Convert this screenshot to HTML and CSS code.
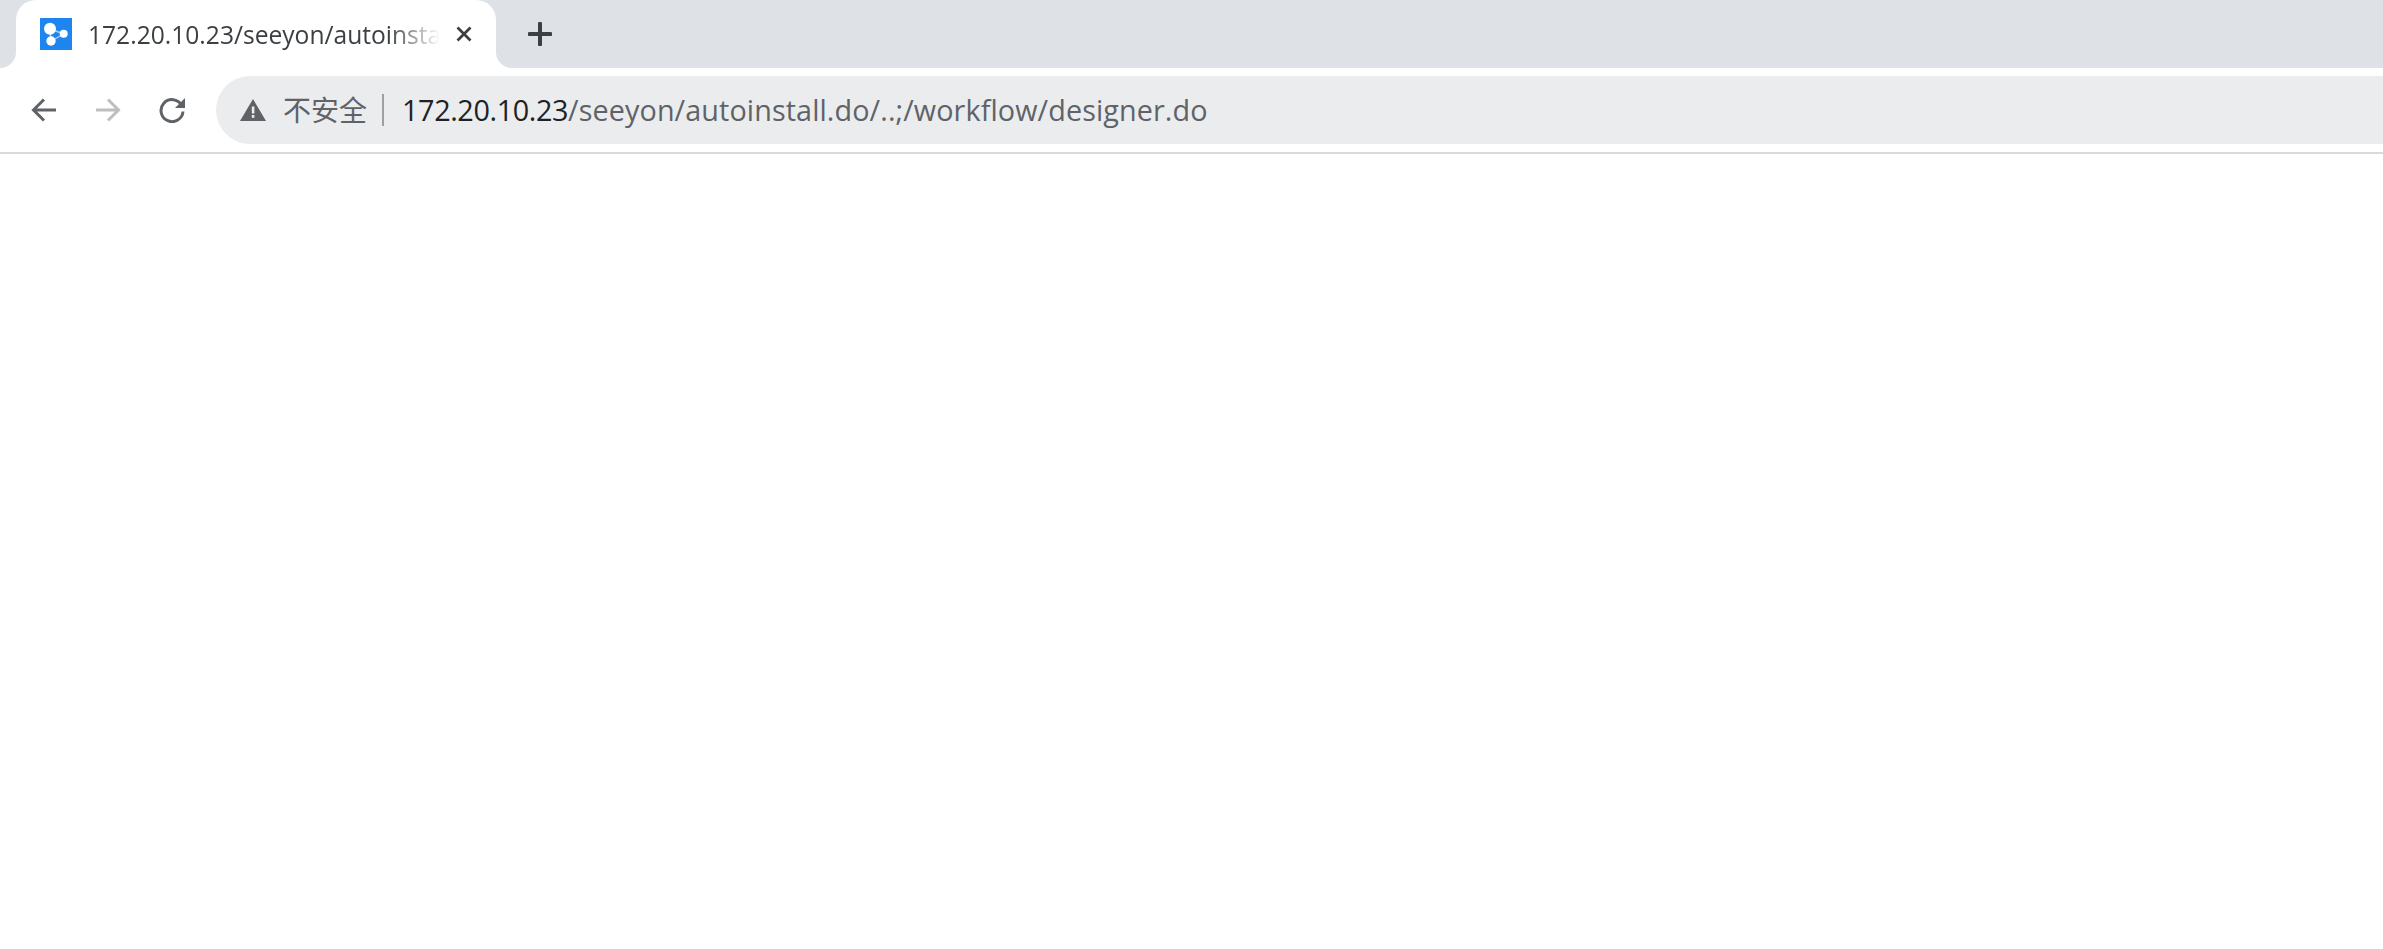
FILE: index.html
```html
<!DOCTYPE html>
<html lang="zh-CN">
<head>
<meta charset="utf-8">
<title>172.20.10.23/seeyon/autoinstall.do/..;/workflow/designer.do</title>
<link rel="stylesheet" href="styles.css">
</head>
<body>
<header class="chrome">
  <div class="tabstrip">
    <div class="tab">
      <svg class="favicon" viewBox="0 0 32 32" aria-hidden="true">
        <rect width="32" height="32" fill="#1e85ef"/>
        <path d="M10 11 24 16M24 16 11 23M10 11 11 23" stroke="#a9d0f8" stroke-width="1.4" fill="none"/>
        <circle cx="10" cy="10.7" r="6" fill="#fff"/>
        <circle cx="11" cy="23" r="4.7" fill="#fff"/>
        <circle cx="23.7" cy="15.7" r="4" fill="#fff"/>
      </svg>
      <span class="tab-title">172.20.10.23/seeyon/autoinstall.do/..;/workflow/designer.do</span>
      <svg class="tab-close" viewBox="0 0 16 16" aria-hidden="true">
        <path d="M1.5 1.5 14.5 14.5M14.5 1.5 1.5 14.5" stroke="#3c4043" stroke-width="2.8" fill="none"/>
      </svg>
    </div>
    <svg class="new-tab" viewBox="0 0 24 24" aria-hidden="true">
      <path d="M12 1.5V22.5M1.5 12H22.5" stroke="#3c4043" stroke-width="4" stroke-linecap="round" fill="none"/>
    </svg>
  </div>
  <div class="toolbar">
    <div class="nav-btn">
      <svg class="nav-icon" viewBox="0 0 26 26" aria-hidden="true">
        <path d="M25 13H3M13 2.5 2.5 13 13 23.5" stroke="#5f6368" stroke-width="3" fill="none"/>
      </svg>
    </div>
    <div class="nav-btn">
      <svg class="nav-icon" viewBox="0 0 26 26" aria-hidden="true">
        <path d="M1 13H23M13 2.5 23.5 13 13 23.5" stroke="#bdbec0" stroke-width="3" fill="none"/>
      </svg>
    </div>
    <div class="nav-btn">
      <svg class="nav-icon" viewBox="0 0 26 26" aria-hidden="true">
        <path d="M22.6 8.2A11 11 0 1 0 24 14.5" stroke="#5f6368" stroke-width="3" fill="none"/>
        <path d="M26 1V11H16Z" fill="#5f6368"/>
      </svg>
    </div>
    <div class="omnibox">
      <svg class="warn" viewBox="0 0 26 22" aria-hidden="true">
        <path d="M13 0 26 22H0Z" fill="#5f6368"/>
        <rect x="11.8" y="7.5" width="2.6" height="7" fill="#ebecee"/>
        <rect x="11.8" y="16" width="2.6" height="2.8" fill="#ebecee"/>
      </svg>
      <span class="insecure">不安全</span>
      <span class="sep"></span>
      <span class="url"><span class="host">172.20.10.23</span>/seeyon/autoinstall.do/..;/workflow/designer.do</span>
    </div>
  </div>
</header>
</body>
</html>
```
FILE: styles.css
```css
* { box-sizing: border-box; }
html, body { margin: 0; padding: 0; height: 100%; background: #fff; overflow: hidden; }
body { font-family: "Open Sans", "Noto Sans CJK SC", sans-serif; }

.chrome { display: flex; flex-direction: column; }

.tabstrip {
  display: flex;
  align-items: center;
  height: 68px;
  padding-left: 16px;
  background: #dee1e6;
}

.tab {
  position: relative;
  display: flex;
  align-items: center;
  align-self: stretch;
  width: 480px;
  padding: 0 24px 0 24px;
  background: #fff;
  border-radius: 20px 20px 0 0;
}
.tab::before, .tab::after {
  content: "";
  position: absolute;
  bottom: 0;
  width: 16px;
  height: 16px;
}
.tab::before {
  left: -16px;
  background: radial-gradient(circle at 0 0, #dee1e6 15.5px, #fff 16.5px);
}
.tab::after {
  right: -16px;
  background: radial-gradient(circle at 100% 0, #dee1e6 15.5px, #fff 16.5px);
}

.favicon { width: 32px; height: 32px; flex: none; }

.tab-title {
  flex: none;
  width: 352px;
  margin-left: 16px;
  overflow: hidden;
  white-space: nowrap;
  font-size: 24.6px;
  color: #3c4043;
  -webkit-mask-image: linear-gradient(to right, #000 300px, transparent 352px);
  mask-image: linear-gradient(to right, #000 300px, transparent 352px);
}

.tab-close { width: 16px; height: 16px; flex: none; margin-left: 16px; }

.new-tab { width: 24px; height: 24px; flex: none; margin-left: 32px; }

.toolbar {
  display: flex;
  align-items: center;
  height: 86px;
  padding: 8px 0 8px 12px;
  background: #fff;
  border-bottom: 2px solid #dadada;
}

.nav-btn {
  display: flex;
  align-items: center;
  justify-content: center;
  width: 64px;
  height: 68px;
  flex: none;
}
.nav-icon { width: 26px; height: 26px; }

.omnibox {
  display: flex;
  align-items: center;
  flex: 1;
  height: 68px;
  margin-left: 12px;
  padding-left: 24px;
  background: #ebecee;
  border-radius: 34px 0 0 34px;
}

.warn { width: 26px; height: 22px; flex: none; }

.insecure { margin: 0 0 2px 17px; font-size: 28px; color: #5f6368; }

.sep { width: 2px; height: 32px; margin: 0 18px 0 15px; background: #9aa0a6; flex: none; }

.url { margin-bottom: 2px; font-size: 28.75px; letter-spacing: 0.1px; color: #5f6368; white-space: nowrap; }
.host { color: #202124; letter-spacing: -0.38px; }
```
